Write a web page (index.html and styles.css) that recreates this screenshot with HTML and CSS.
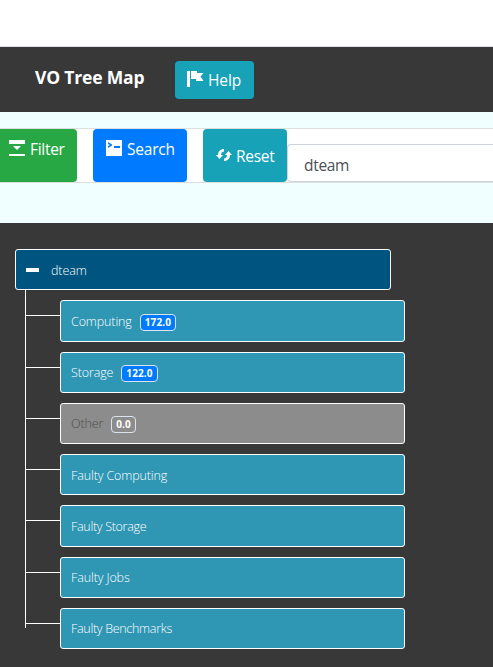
FILE: index.html
```html
<!DOCTYPE html>
<html lang="en">
<head>
<meta charset="utf-8">
<title>VO Tree Map</title>
<link rel="stylesheet" href="styles.css">
</head>
<body>
<header class="header">
  <h1 class="title">VO Tree Map</h1>
  <button class="btn help"><svg class="icon" viewBox="0 0 16 16"><path d="M0 0h3v16H0zM4 0h6v2h6.500L13.500 5.500 16.500 10H9V8H4z"/></svg><span class="help-text">Help</span></button>
</header>
<main>
  <section class="filters">
    <div class="toolbar">
      <button class="btn filter"><svg class="icon" viewBox="0 0 16 16"><path d="M0 0h16v4H0zM4 6h8l-4 4zM0 14h16v2H0z"/></svg><span class="filter-text">Filter</span></button>
      <button class="btn search"><svg class="icon" viewBox="0 0 16 16"><path fill-rule="evenodd" d="M0 0h16v16H0zM2 2v2l2 1-2 1v2l4-2.500V4.500zM8 6v2h6V6z"/></svg><span class="search-text">Search</span></button>
      <button class="btn reset"><svg class="icon" viewBox="0 0 16 16"><path d="M8 2v2.500C6 4.500 5 5.800 5 8h2L3.500 12 0 8h2c0-3.500 2.500-6 6-6zM12.500 4 16 8h-2c0 3.500-2.500 6-6 6v-2.500c2 0 3-1.300 3-3.500H9z"/></svg><span class="reset-text">Reset</span></button>
      <div class="field">dteam</div>
    </div>
  </section>
  <section class="tree">
    <div class="node root"><i class="minus"></i><span class="root-text">dteam</span></div>
    <ul class="branch">
      <li><div class="node"><span>Computing</span><b class="badge">172.0</b></div></li>
      <li><div class="node"><span>Storage</span><b class="badge">122.0</b></div></li>
      <li><div class="node disabled"><span>Other</span><b class="badge">0.0</b></div></li>
      <li><div class="node"><span>Faulty Computing</span></div></li>
      <li><div class="node tight"><span>Faulty Storage</span></div></li>
      <li><div class="node"><span>Faulty Jobs</span></div></li>
      <li><div class="node tight"><span>Faulty Benchmarks</span></div></li>
    </ul>
  </section>
</main>
</body>
</html>
```
FILE: styles.css
```css
* { box-sizing: border-box; }
body {
  margin: 0;
  padding-top: 46px;
  overflow: hidden;
  background: #fff;
  font-family: "Open Sans", sans-serif;
}
.header {
  display: flex;
  align-items: flex-start;
  height: 66px;
  padding: 14px 0 0 35px;
  border-top: 1px solid #dee2e6;
  background: #383838;
}
.title {
  width: 140px;
  margin: 3px 0 0;
  color: #fff;
  font-size: 17.5px;
  font-weight: 700;
  letter-spacing: -0.17px;
  line-height: 26px;
  white-space: nowrap;
}
.btn {
  display: flex;
  align-items: flex-start;
  flex: none;
  padding: 0;
  border: 0;
  border-radius: 4px;
  color: #fff;
  font: 400 15.5px/24px "Open Sans", sans-serif;
  white-space: nowrap;
}
.icon {
  flex: none;
  overflow: visible;
  width: 16px;
  height: 16px;
  fill: currentColor;
}
.btn span { margin-left: 5px; }
.help { width: 79px; height: 38px; padding: 10px 0 0 12px; background: #17a2b8; }
.help span { margin-top: -3px; letter-spacing: -0.1px; }
.filters {
  height: 111px;
  padding-top: 16px;
  background: #f0ffff;
}
.toolbar {
  display: flex;
  height: 55px;
  border: solid #dedede;
  border-width: 1px 0;
  background: #fff;
}
.toolbar .btn { height: 53px; }
.toolbar .btn span { margin-top: -3px; }
.toolbar .filter { width: 77px; padding: 11px 0 0 9px; border-radius: 0 4px 4px 0; background: #28a745; }
.toolbar .search { width: 94px; margin-left: 16px; padding: 11px 0 0 13px; background: #007bff; }
.toolbar .reset { width: 84px; margin-left: 16px; padding: 18px 0 0 13px; background: #17a2b8; }
.toolbar .filter-text { letter-spacing: -0.3px; }
.toolbar .search .search-text { letter-spacing: -0.2px; }
.toolbar .reset .reset-text { margin-left: 4px; letter-spacing: -0.3px; }
.field {
  flex: 1;
  height: 38px;
  margin-top: 15px;
  padding-left: 16px;
  border: 1px solid #ced4da;
  border-right: 0;
  border-radius: 4px 0 0 4px;
  color: #495057;
  font-size: 15.5px;
  letter-spacing: -0.3px;
  line-height: 40px;
}
.tree {
  height: 444px;
  padding: 26px 0 0 15px;
  background: #383838;
}
.node {
  display: flex;
  align-items: center;
  width: 345px;
  height: 41.25px;
  padding: 1px 10px 0;
  border: 1px solid #fff;
  border-radius: 3px;
  background: #2f96b4;
  color: #fff;
  font-size: 12.5px;
  font-weight: 300;
  letter-spacing: -0.12px;
  white-space: nowrap;
}
.tight { letter-spacing: -0.3px; }
.root { width: 376px; background: #005580; }
.minus { width: 13px; height: 4px; margin: -1px 12px 0 0; background: #fff; }
.branch {
  position: relative;
  margin: 0 0 0 10px;
  padding: 0;
  list-style: none;
}
.branch::before {
  content: "";
  position: absolute;
  top: 0;
  left: 0;
  width: 1px;
  height: 338px;
  background: #fff;
}
.branch li {
  position: relative;
  padding: 10px 0 0 35px;
}
.branch li::before {
  content: "";
  position: absolute;
  top: 25px;
  left: 0;
  width: 35px;
  height: 1px;
  background: #fff;
}
.badge {
  height: 17px;
  margin: 2px 0 0 8px;
  padding: 0 4px;
  border: 1px solid #dbe4ed;
  border-radius: 4px;
  background: #007bff;
  font-size: 10px;
  font-weight: 700;
  letter-spacing: 0.1px;
  line-height: 15px;
}
.disabled { background: #8c8c8c; color: #4d4d4d; }
.disabled .badge { background: #8c8c8c; color: #fff; }
```
